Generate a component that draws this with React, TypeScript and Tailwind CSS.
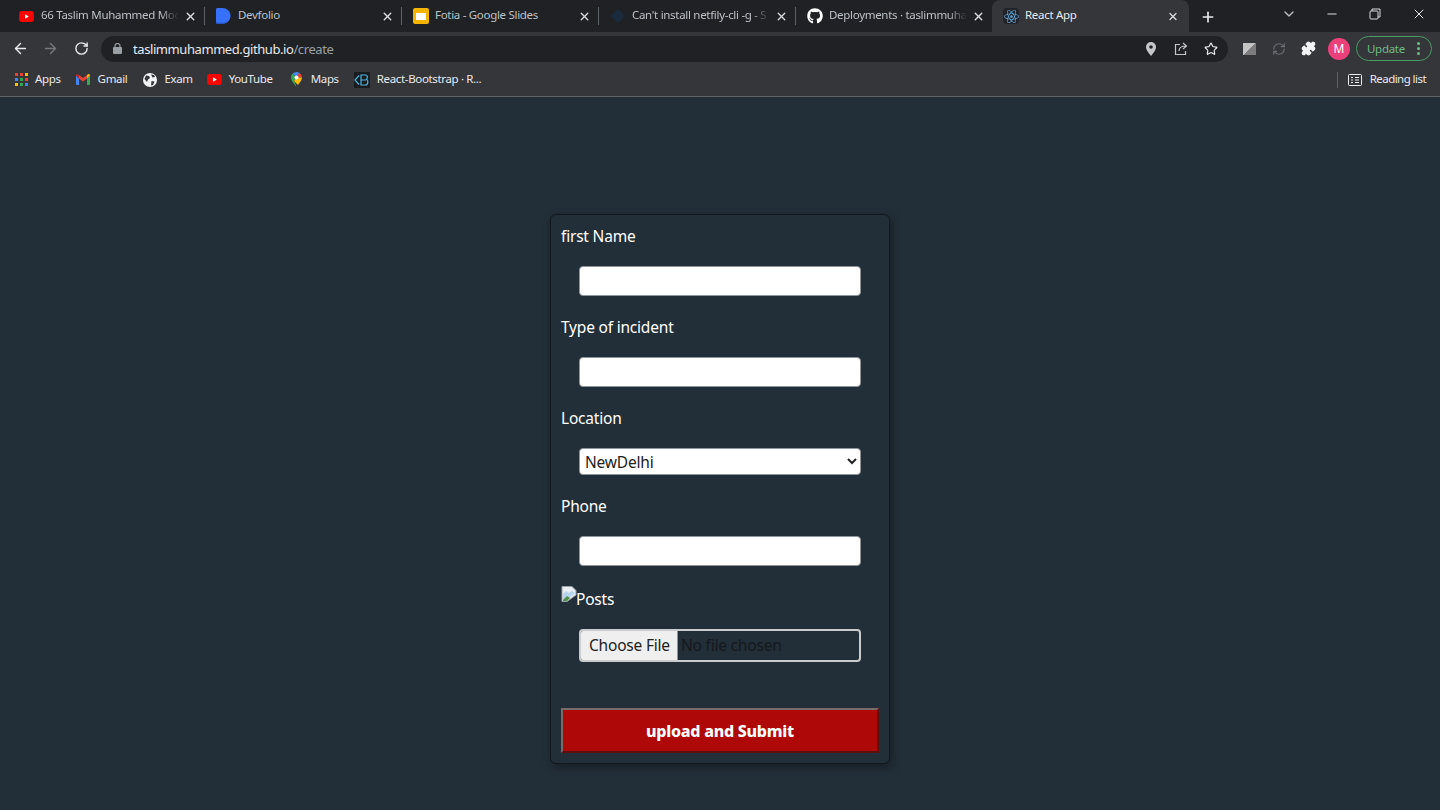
import { ReactNode } from 'react'
import {
  ArrowLeft,
  ArrowRight,
  ChevronDown,
  Minus,
  Plus,
  Puzzle,
  RefreshCw,
  RotateCw,
  Star,
  X,
} from 'lucide-react'
import { FaGithub, FaReact } from 'react-icons/fa'

const uiFont = "[font-family:'Noto_Sans','Open_Sans',sans-serif]"

function YouTubeIcon() {
  return (
    <svg width="15" height="11" viewBox="0 0 16 12">
      <rect width="16" height="12" rx="3" fill="#ff0000" />
      <path d="M6.500 3.500v5l4-2.500z" fill="#fff" />
    </svg>
  )
}

function DevfolioIcon() {
  return (
    <svg width="15" height="16" viewBox="0 0 15 16">
      <path d="M0 1.500C0 .7.7 0 1.500 0H6c5 0 8.500 3.300 8.500 7.800S11 16 6 16H1.500C.7 16 0 15.300 0 14.500z" fill="#3770ff" />
      <path d="M0 14c2 1 8 1 11-.5C9.500 15 8 16 6 16H1.500C.7 16 0 15.300 0 14z" fill="#2a58c8" />
    </svg>
  )
}

function SlidesIcon() {
  return (
    <svg width="16" height="16" viewBox="0 0 16 16">
      <rect width="16" height="16" rx="2" fill="#f4b400" />
      <rect x="3" y="5" width="10" height="7" fill="#fff" />
    </svg>
  )
}

function StackIcon() {
  return (
    <svg width="16" height="16" viewBox="0 0 16 16">
      <path d="M8 1l7 7-7 7-7-7z" fill="#1b2a3d" />
    </svg>
  )
}

function GlobeIcon() {
  return (
    <svg width="14" height="14" viewBox="0 0 14 14">
      <circle cx="7" cy="7" r="7" fill="#f1f3f4" />
      <path d="M3 2.500l3 .5 1 2-2 1.500-1 2.500L1.500 6zM8.500 8l3 .5L10 12l-2 .5zM8 1.500l3 .5 1 2-2.500.5z" fill="#35363a" />
    </svg>
  )
}

function GmailIcon() {
  return (
    <svg width="14" height="11" viewBox="0 0 14 11">
      <path d="M0 1.500V10c0 .5.400 1 1 1h2V4.500z" fill="#4285f4" />
      <path d="M14 1.500V10c0 .5-.4 1-1 1h-2V4.500z" fill="#34a853" />
      <path d="M3 4.500L7 7.500l4-3V1L7 4 3 1z" fill="#ea4335" />
      <path d="M0 1.500L3 4.500V1L2 .3C1.200-.3 0 .3 0 1.500z" fill="#c5221f" />
      <path d="M14 1.500L11 4.500V1l1-.7c.8-.6 2 0 2 1.200z" fill="#fbbc04" />
    </svg>
  )
}

function MapsIcon() {
  return (
    <svg width="11" height="16" viewBox="0 0 11 16">
      <path d="M5.500 16C5 13 0 10 0 5.500a5.500 5.500 0 0 1 1.600-3.900L5.500 5.500 3 9c1 1.500 2 3.500 2.500 7z" fill="#34a853" />
      <path d="M1.600 1.600A5.500 5.500 0 0 1 5.500 0c1 0 2 .3 2.700.7L5.500 5.500z" fill="#4285f4" />
      <path d="M8.200.7A5.500 5.500 0 0 1 11 5.500L5.500 5.500z" fill="#ea4335" />
      <path d="M11 5.500c0 3-2.500 5-4 7.500L3 9l2.500-3.500z" fill="#fbbc04" />
      <circle cx="5.500" cy="5.500" r="2" fill="#fff" />
    </svg>
  )
}

function BootstrapIcon() {
  return (
    <div className="flex h-4 w-4 items-center justify-center bg-[#1a1d20]">
      <svg width="16" height="16" viewBox="0 0 16 16" fill="none" stroke="#4fb3e0" strokeWidth="1.200">
        <path d="M5 3.500L1 8l4 4.500M7 3h4.500c2 0 2.500 2.300 1 4.500 2 .5 1.800 5.500-1 5.500H7zM7 8h5" />
      </svg>
    </div>
  )
}

function AppsIcon() {
  const colors = [
    '#ea4335', '#ea4335', '#fbbc04',
    '#4285f4', '#34a853', '#ea4335',
    '#fbbc04', '#34a853', '#4285f4',
  ]
  return (
    <div className="grid grid-cols-3 gap-[2px]">
      {colors.map((c, i) => (
        <div key={i} className="h-[3px] w-[3px]" style={{ backgroundColor: c }} />
      ))}
    </div>
  )
}

function Tab({ icon, title, active, fade }: { icon: ReactNode; title: string; active?: boolean; fade?: boolean }) {
  return (
    <div
      className={`relative flex h-8 w-[197px] shrink-0 items-center pl-[11px] text-[11.5px] tracking-[-0.3px] ${
        active ? 'rounded-t-lg bg-[#35363a] pr-[10px] text-[#e8eaed]' : 'pr-2 text-[#bdc1c6]'
      }`}
    >
      <div className="flex w-[22px] shrink-0 items-center">{icon}</div>
      <div
        className={`mb-[2px] w-[142px] shrink-0 overflow-hidden whitespace-nowrap ${
          fade ? '[mask-image:linear-gradient(to_right,black_84%,transparent_97%)]' : ''
        }`}
      >
        {title}
      </div>
      <X size={13} strokeWidth={2.5} className="ml-auto text-[#dadce0]" />
      {!active && <div className="absolute right-0 top-[7px] h-[18px] w-px bg-[#5f6368]" />}
    </div>
  )
}

function Bookmark({ icon, label, className }: { icon: ReactNode; label: string; className: string }) {
  return (
    <div className={`flex items-center whitespace-nowrap ${className}`}>
      {icon}
      <span className="mb-[2px]">{label}</span>
    </div>
  )
}

function Field({ label, className, children }: { label: ReactNode; className: string; children: ReactNode }) {
  return (
    <div className={className}>
      <div className="h-6 leading-6 text-white">{label}</div>
      {children}
    </div>
  )
}

const inputClass = 'ml-[18px] block w-[282px] rounded border border-[#8f9499] bg-white'

export default function App() {
  return (
    <div className={`flex h-screen flex-col overflow-hidden bg-[#222e38] ${uiFont}`}>
      {/* Tab strip */}
      <div className="flex h-8 shrink-0 items-center bg-[#202124] pl-2">
        <Tab icon={<YouTubeIcon />} title="66 Taslim Muhammed Moo" fade />
        <Tab icon={<DevfolioIcon />} title="Devfolio" />
        <Tab icon={<SlidesIcon />} title="Fotia - Google Slides" />
        <Tab icon={<StackIcon />} title="Can't install netfily-cli -g - S" fade />
        <div className="-mr-px">
          <Tab icon={<FaGithub size={16} color="#fff" />} title="Deployments · taslimmuhar" fade />
        </div>
        <Tab
          icon={
            <div className="flex h-4 w-4 items-center justify-center rounded-sm bg-[#20232a]">
              <FaReact size={15} color="#61a5d8" />
            </div>
          }
          title="React App"
          active
        />
        <Plus size={16} strokeWidth={2.5} className="ml-[11px] mt-px text-[#e8eaed]" />
        <ChevronDown size={16} className="ml-[65px] -mt-1 text-[#bdc1c6]" />
        <Minus size={14} className="ml-[28px] -mt-1 text-[#dadce0]" />
        <svg width="12" height="12" viewBox="0 0 12 12" fill="none" stroke="#dadce0" className="ml-[30px] -mt-1">
          <rect x="1" y="3" width="8" height="8" rx="1" />
          <path d="M3 3V1h8v8H9" />
        </svg>
        <X size={16} strokeWidth={1.5} className="ml-[30px] -mt-1 text-[#e8eaed]" />
      </div>

      {/* Toolbar */}
      <div className="flex h-[33px] shrink-0 items-center bg-[#35363a] pl-3">
        <ArrowLeft size={17} className="text-[#e8eaed]" />
        <ArrowRight size={17} className="ml-[13px] text-[#75777b]" />
        <RotateCw size={15} strokeWidth={2.25} className="ml-[15px] text-[#e8eaed]" />
        <div className="ml-[12px] flex h-[26px] w-[1127px] shrink-0 items-center rounded-full bg-[#202124] pl-3 pr-2">
          <svg width="9" height="11" viewBox="0 0 9 11">
            <rect y="4" width="9" height="7" rx="1" fill="#9aa0a6" />
            <path d="M2 4.500V3a2.500 2.500 0 0 1 5 0v1.500" fill="none" stroke="#9aa0a6" strokeWidth="1.200" />
          </svg>
          <div className="ml-[11px] mt-[2px] text-[13px] leading-none tracking-[-0.42px] text-[#e8eaed]">
            taslimmuhammed.github.io<span className="text-[#9aa0a6]">/create</span>
          </div>
          <svg width="10" height="14" viewBox="0 0 10 14" className="ml-auto">
            <path d="M5 0a5 5 0 0 0-5 5c0 3.500 5 9 5 9s5-5.500 5-9a5 5 0 0 0-5-5z" fill="#c4c7ca" />
            <circle cx="5" cy="5" r="1.800" fill="#202124" />
          </svg>
          <svg width="14" height="14" viewBox="0 0 14 14" fill="none" stroke="#c4c7ca" strokeWidth="1.200" className="ml-[18px]">
            <path d="M6 2.500H1.500v10h10V9" />
            <path d="M5 9c0-3 2.500-5 7-5M9 1l3.500 3L9 7" />
          </svg>
          <Star size={14} className="ml-[16px] mr-[2px] text-[#e8eaed]" />
        </div>
        <div className="ml-[15px] h-3 w-[13px] bg-[linear-gradient(135deg,#c4c4c4_50%,#7d7d7d_50%)]" />
        <RefreshCw size={14} className="ml-[16px] text-[#6b6e72]" />
        <Puzzle size={15} fill="#f1f3f4" className="ml-[15px] text-[#f1f3f4]" />
        <div className="ml-[12px] flex h-[22px] w-[22px] items-center justify-center rounded-full bg-[#ec407a] text-xs text-white">
          M
        </div>
        <div className="ml-[6px] flex h-[25px] w-[76px] items-center rounded-full border border-[#4d9a66] pl-[10px] pr-[11px] text-[11.5px] tracking-[-0.3px] text-[#6dbb85]">
          Update
          <div className="ml-auto flex flex-col gap-[2px]">
            <div className="h-[3px] w-[3px] rounded-full bg-[#6dbb85]" />
            <div className="h-[3px] w-[3px] rounded-full bg-[#6dbb85]" />
            <div className="h-[3px] w-[3px] rounded-full bg-[#6dbb85]" />
          </div>
        </div>
      </div>

      {/* Bookmarks bar */}
      <div className="flex h-[32px] shrink-0 items-center justify-between border-b border-[#5f6368] bg-[#35363a] pb-[2px] pl-[15px] pr-[14px] text-[11.5px] tracking-[-0.35px] text-[#e8eaed]">
        <div className="flex items-center">
          <Bookmark icon={<AppsIcon />} label="Apps" className="gap-[7px]" />
          <Bookmark icon={<GmailIcon />} label="Gmail" className="ml-[15px] gap-2" />
          <Bookmark icon={<GlobeIcon />} label="Exam" className="ml-[16px] gap-[7px]" />
          <Bookmark icon={<YouTubeIcon />} label="YouTube" className="ml-[14px] gap-[7px]" />
          <Bookmark icon={<MapsIcon />} label="Maps" className="ml-[18px] gap-[9px]" />
          <Bookmark icon={<BootstrapIcon />} label="React-Bootstrap · R..." className="ml-[15px] gap-[7px]" />
        </div>
        <div className="flex items-center">
          <div className="mr-[10px] h-[16px] w-px bg-[#5f6368]" />
          <svg width="14" height="12" viewBox="0 0 14 12" fill="none" stroke="#e8eaed" className="mr-2">
            <rect x=".5" y=".5" width="13" height="11" rx="1" />
            <path d="M3 3.500h2M3 6h2M3 8.500h2M7 3.500h4M7 6h4M7 8.500h4" />
          </svg>
          <span className="mb-[2px] tracking-[-0.55px]">Reading list</span>
        </div>
      </div>

      {/* Page */}
      <div className="flex flex-1 justify-center pt-[117px]">
        <form className="flex h-[550px] w-[340px] shrink-0 flex-col rounded-md border border-[#12181e] bg-[#222e38] pl-[10px] pt-[9px] text-[15.5px] tracking-[-0.2px] shadow-[2px_3px_8px_rgba(0,0,0,0.35)]">
          <Field label="first Name" className="">
            <input type="text" className={`${inputClass} mt-[18px] h-[30px]`} />
          </Field>
          <Field label="Type of incident" className="mt-[19px]">
            <input type="text" className={`${inputClass} mt-[18px] h-[30px]`} />
          </Field>
          <Field label="Location" className="mt-[19px]">
            <select className={`${inputClass} mt-[18px] h-[27px] pl-[1px] text-[#222]`} defaultValue="NewDelhi">
              <option>NewDelhi</option>
            </select>
          </Field>
          <Field label="Phone" className="mt-[19px]">
            <input type="text" className={`${inputClass} mt-[18px] h-[30px]`} />
          </Field>
          <Field
            label={
              <div className="flex items-start">
                <svg width="16" height="16" viewBox="0 0 16 16" className="-mt-[1px] -mr-px">
                  <path d="M1 .5h10l4 4V9l-9 6.500H1z" fill="#e8eef2" stroke="#9aa0a6" />
                  <path d="M2 8l3-3 3 2 3-2 3 2-8 7H2z" fill="#b6d4ee" />
                  <path d="M2 14l4-4 3 2-3 3H2z" fill="#4f8f4a" />
                </svg>
                <span>Posts</span>
              </div>
            }
            className="mt-[21px]"
          >
            <input
              type="file"
              className="ml-[18px] mt-[18px] block h-[33px] w-[282px] rounded border-2 border-[#c9ccce] leading-[29px] text-[#15191d] file:mr-[3px] file:h-[29px] file:border-0 file:border-r file:border-[#8f9499] file:bg-[#efefef] file:pl-2 file:pr-[7px] file:text-[15.5px] file:text-[#222]"
            />
          </Field>
          <button
            type="button"
            className="mt-[46px] h-[45px] w-[318px] border-2 border-t-[#7a6a6a] border-l-[#7a6a6a] border-r-[#5e1010] border-b-[#5e1010] bg-[#ae0808] text-base font-extrabold tracking-[-0.25px] text-white"
          >
            upload and Submit
          </button>
        </form>
      </div>
    </div>
  )
}
